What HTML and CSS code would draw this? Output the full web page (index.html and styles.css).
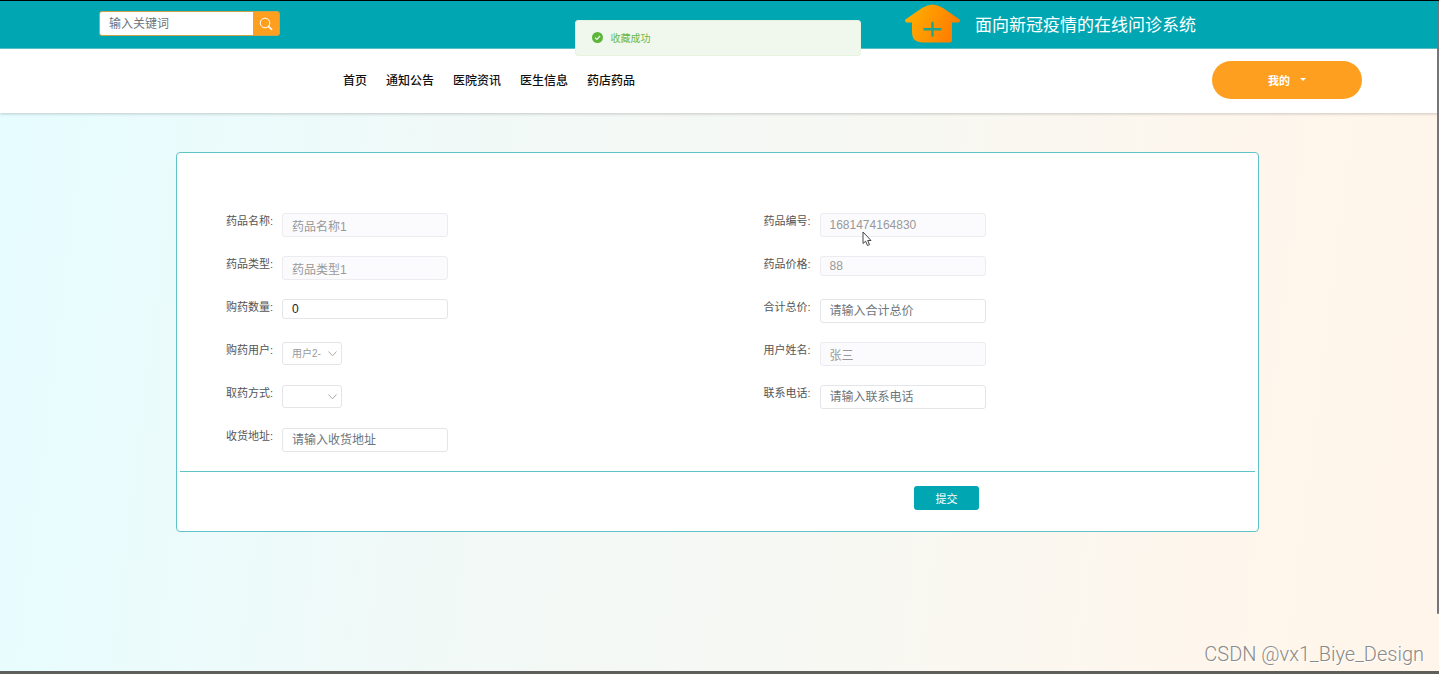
FILE: index.html
```
<!DOCTYPE html>
<html lang="zh-CN">
<head>
    <meta charset="UTF-8">
    <meta name="viewport" content="width=device-width, initial-scale=1.0">
    <title>面向新冠疫情的在线问诊系统</title>
    <link rel="stylesheet" href="styles.css">
</head>
<body>
    <header class="topbar">
        <form class="search">
            <input type="text" class="search-input" placeholder="输入关键词" aria-label="输入关键词">
            <button type="button" class="search-btn" aria-label="搜索">
                <svg width="14" height="14" viewBox="0 0 14 14" fill="none" stroke="#fff">
                    <circle cx="6" cy="6" r="4.8" stroke-width="1"/>
                    <path d="M9.6 9.6L12.6 12.4" stroke-width="1.6" stroke-linecap="round"/>
                </svg>
            </button>
        </form>
        <div class="brand">
            <svg class="logo" width="57" height="40" viewBox="0 0 57 40">
                <defs>
                    <linearGradient id="house" x1="0" y1="0" x2="1" y2="0.3">
                        <stop offset="0" stop-color="#ffb400"/>
                        <stop offset="1" stop-color="#ff7e00"/>
                    </linearGradient>
                </defs>
                <path fill="url(#house)" d="M1.5 15.5L18 4Q28.5 -3 39 4L55.5 15.5Q57 18 54 18.500H48V36Q48 38.500 45.500 38.500H19Q8 38.500 8 28V18.500H3Q0 18 1.5 15.5Z"/>
                <path stroke="#1fa58c" stroke-width="2.4" stroke-linecap="round" d="M28.500 19V31.500M20.500 25.300H36.500"/>
            </svg>
            <span class="brand-name">面向新冠疫情的在线问诊系统</span>
        </div>
    </header>

    <nav class="navbar">
        <div class="nav-links">
            <a href="#">首页</a>
            <a href="#">通知公告</a>
            <a href="#">医院资讯</a>
            <a href="#">医生信息</a>
            <a href="#">药店药品</a>
        </div>
        <button type="button" class="my-btn">我的 <span class="caret"></span></button>
    </nav>

    <main class="content">
        <form class="card">
            <div class="fields">
                <div class="field">
                    <label for="name">药品名称:</label>
                    <input type="text" id="name" value="药品名称1" disabled>
                </div>
                <div class="field">
                    <label for="code">药品编号:</label>
                    <input type="text" id="code" value="1681474164830" disabled>
                </div>
                <div class="field">
                    <label for="type">药品类型:</label>
                    <input type="text" id="type" value="药品类型1" disabled>
                </div>
                <div class="field">
                    <label for="price">药品价格:</label>
                    <input type="number" id="price" value="88" disabled>
                </div>
                <div class="field">
                    <label for="count">购药数量:</label>
                    <input type="number" id="count" value="0">
                </div>
                <div class="field">
                    <label for="total">合计总价:</label>
                    <input type="text" id="total" placeholder="请输入合计总价">
                </div>
                <div class="field">
                    <label for="user">购药用户:</label>
                    <div class="select">
                        <select id="user" disabled>
                            <option>用户2-</option>
                        </select>
                        <svg class="arrow" width="9" height="6" viewBox="0 0 9 6"><path d="M0.500 0.500L4.500 4.800L8.500 0.500"/></svg>
                    </div>
                </div>
                <div class="field">
                    <label for="realname">用户姓名:</label>
                    <input type="text" id="realname" value="张三" disabled>
                </div>
                <div class="field">
                    <label for="way">取药方式:</label>
                    <div class="select">
                        <select id="way">
                            <option></option>
                        </select>
                        <svg class="arrow" width="9" height="6" viewBox="0 0 9 6"><path d="M0.500 0.500L4.500 4.800L8.500 0.500"/></svg>
                    </div>
                </div>
                <div class="field">
                    <label for="phone">联系电话:</label>
                    <input type="text" id="phone" placeholder="请输入联系电话">
                </div>
                <div class="field">
                    <label for="address">收货地址:</label>
                    <input type="text" id="address" placeholder="请输入收货地址">
                </div>
            </div>
            <div class="actions">
                <button type="button" class="submit-btn">提交</button>
            </div>
        </form>
    </main>

    <div class="message" role="alert">
        <svg width="11" height="11" viewBox="0 0 11 11">
            <circle cx="5.500" cy="5.500" r="5.500" fill="#5db53a"/>
            <path d="M3 5.700L4.900 7.400L8 4" fill="none" stroke="#f0f7ec" stroke-width="1.200"/>
        </svg>
        <span>收藏成功</span>
    </div>

    <svg class="pointer" width="10" height="16" viewBox="0 0 10 16">
        <path d="M1 1V12.500L3.600 10.200L5.500 14.500L7.500 13.600L5.700 9.500H9Z" fill="#fff" stroke="#444" stroke-width="1"/>
    </svg>
    <div class="watermark">CSDN @vx1_Biye_Design</div>
    <div class="scroll-thumb"></div>
</body>
</html>
```
FILE: styles.css
```
* {
    box-sizing: border-box;
}

body {
    margin: 0;
    min-height: 100vh;
    display: flex;
    flex-direction: column;
    position: relative;
    border-top: 1px solid #000;
    border-bottom: 3px solid #5e5f5b;
    font-family: "Liberation Sans", "Noto Sans CJK SC", sans-serif;
    font-size: 12px;
    color: #333;
    background: linear-gradient(97deg, #e6fcff 0%, #e9fcfe 8%, #f1f9f7 33%, #f8f8f2 62%, #fff6ec 88%, #fff5ea 100%);
}

input, select, button {
    font-family: inherit;
}

/* top bar */
.topbar {
    display: flex;
    align-items: center;
    justify-content: space-between;
    height: 48px;
    padding: 0 243px 2px 99px;
    background: #00a7b3;
    border-bottom: 1px solid #5cc4cc;
}

.search {
    display: flex;
    width: 181px;
    height: 25px;
    border: 1px solid #c9a24a;
    border-radius: 3px;
    overflow: hidden;
    background: #ff9f1f;
}

.search-input {
    flex: 1;
    min-width: 0;
    padding: 0 9px;
    border: none;
    font-size: 12px;
    background: #fff;
}

input::placeholder {
    color: #6c757d;
    opacity: 1;
}

.search-btn {
    display: flex;
    align-items: center;
    justify-content: center;
    width: 26px;
    padding: 0;
    border: none;
    background: #ff9f1f;
}

.brand {
    display: flex;
    align-items: center;
    gap: 14px;
}

.brand-name {
    font-size: 17px;
    color: #fff;
}

/* navigation */
.navbar {
    display: flex;
    align-items: center;
    justify-content: space-between;
    height: 64px;
    padding: 0 77px 3px 343px;
    background: #fff;
    box-shadow: 0 1px 3px rgba(0, 0, 0, 0.2);
}

.nav-links {
    display: flex;
    gap: 19px;
}

.nav-links a {
    font-weight: 500;
    color: #111;
    text-decoration: none;
}

.my-btn {
    display: flex;
    align-items: center;
    justify-content: center;
    gap: 10px;
    width: 150px;
    height: 38px;
    border: none;
    border-radius: 19px;
    background: #ff9f1f;
    color: #fff;
    font-size: 11px;
    font-weight: bold;
}

.caret {
    border: 3px solid transparent;
    border-top-color: #fff;
    border-bottom: none;
}

/* order form */
.content {
    flex: 1;
    padding: 39px 180px 39px 176px;
}

.card {
    padding: 57px 3px 0;
    border: 1px solid #5fc4c9;
    border-radius: 4px;
    background: #fff;
}

.fields {
    display: grid;
    grid-template-columns: 1fr 1fr;
    grid-auto-rows: 43px;
    padding-top: 3px;
}

.field {
    display: flex;
    align-items: flex-start;
    gap: 8px;
    padding-left: 46px;
}

.field label {
    width: 48px;
    line-height: 17px;
    font-size: 11px;
    color: #555;
    white-space: nowrap;
}

.field input {
    width: 166px;
    height: 24px;
    padding: 0 9px;
    border: 1px solid #e4e5e8;
    border-radius: 3px;
    font-size: 12px;
    color: #222;
    background: #fff;
}

.field input[type="number"] {
    height: 20px;
    appearance: textfield;
}

.field input:disabled {
    color: #999;
    border-color: #ececf0;
    background: #fbfbfd;
}

.select {
    position: relative;
}

.select select {
    display: block;
    width: 60px;
    height: 23px;
    padding: 0 16px 0 9px;
    border: 1px solid #e4e5e8;
    border-radius: 3px;
    appearance: none;
    font-size: 10px;
    color: #555;
    background: #fff;
}

.select select:disabled {
    color: #999;
    opacity: 1;
}

.arrow {
    position: absolute;
    right: 5px;
    top: 9px;
    fill: none;
    stroke: #aaa;
    pointer-events: none;
}

.actions {
    display: flex;
    justify-content: flex-end;
    padding: 14px 276px 21px 0;
    border-top: 1px solid #5fc4c9;
}

.submit-btn {
    width: 65px;
    height: 24px;
    border: none;
    border-radius: 3px;
    background: #00a7b3;
    color: #fff;
    font-size: 11px;
}

/* success message */
.message {
    position: absolute;
    top: 19px;
    left: calc(50% - 2px);
    transform: translateX(-50%);
    display: flex;
    align-items: center;
    gap: 8px;
    width: 286px;
    height: 36px;
    padding: 0 16px 1px;
    border: 1px solid #e6f3df;
    border-radius: 3px;
    background: #f0f7ec;
    color: #67b84a;
    font-size: 10px;
}

.pointer {
    position: absolute;
    top: 230px;
    left: 862px;
}

.watermark {
    position: absolute;
    right: 15px;
    bottom: 2px;
    font-family: Roboto, "Liberation Sans", sans-serif;
    font-size: 20px;
    font-weight: 300;
    line-height: 30px;
    color: #8a8a88;
    text-shadow: 1px 1px 0 #fff;
}

.scroll-thumb {
    position: absolute;
    top: 0;
    right: 0;
    width: 2px;
    height: 613px;
    max-height: 100%;
    border-radius: 0 0 2px 2px;
    background: #77757a;
}
```
